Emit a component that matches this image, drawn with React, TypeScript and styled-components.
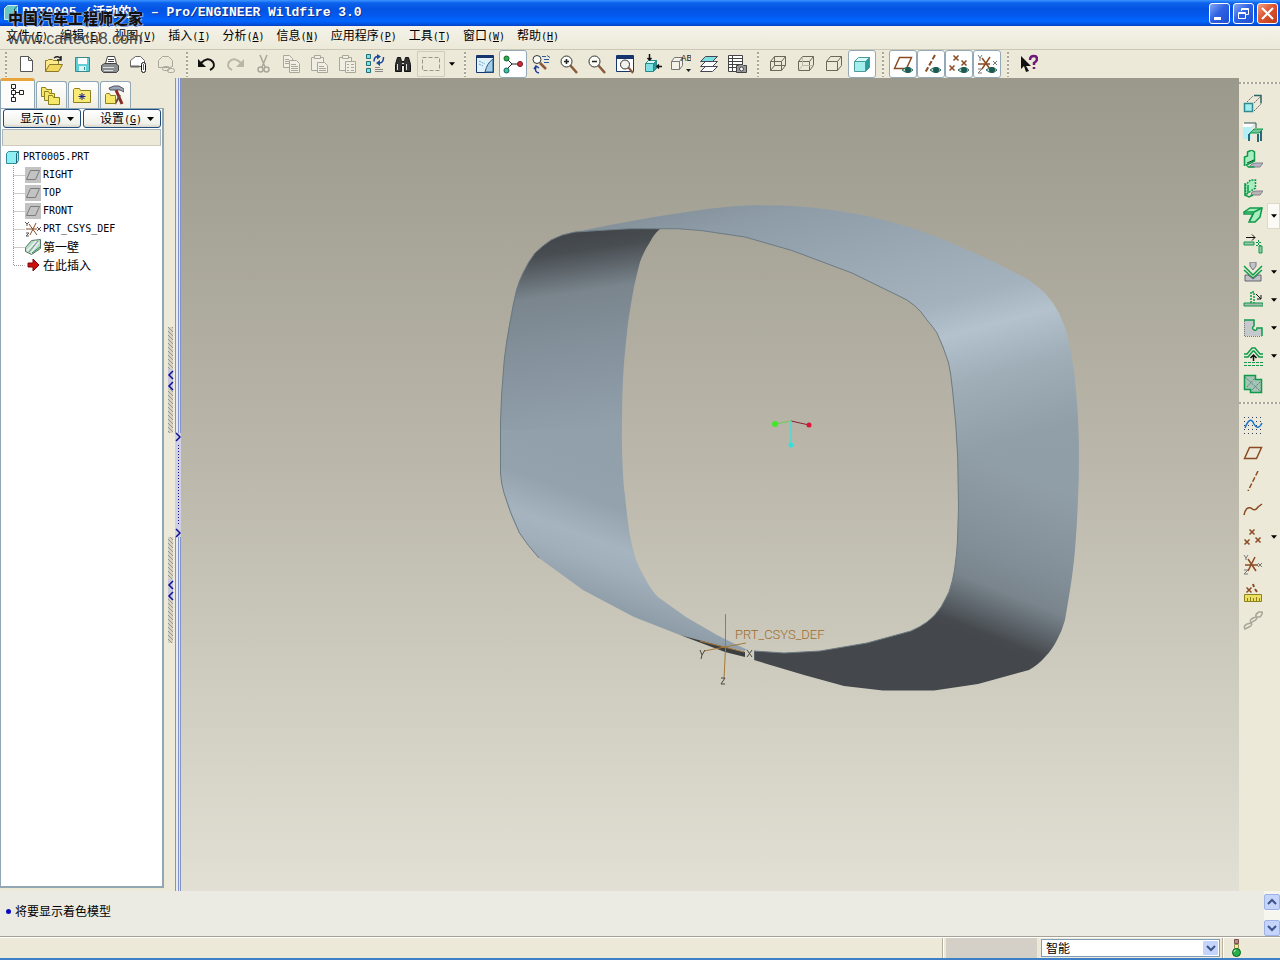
import React from "react";
import styled, { createGlobalStyle, css } from "styled-components";

const GlobalStyle = createGlobalStyle`
  * { box-sizing: border-box; }
  html, body { margin: 0; height: 100%; }
  body {
    background: #ece9d8;
    color: #000;
    font-family: "Noto Sans CJK SC", "Liberation Sans", sans-serif;
    font-size: 12px;
    line-height: 16px;
    overflow: hidden;
  }
  button, select { font: inherit; color: inherit; padding: 0; margin: 0; border: 0; background: none; }
  svg { display: block; }
`;

const Window = styled.div`
  display: flex;
  flex-direction: column;
  height: 100vh;
  border-bottom: 2px solid #3f7fc8;
`;

/* Half-width Latin text that sits beside full-width Chinese characters */
const Latin = styled.span`
  font-family: "DejaVu Sans Mono", monospace;
  font-size: 10px;
`;

/* ---------- title bar ---------- */
const TitleBar = styled.header`
  flex: none;
  height: 26px;
  display: flex;
  align-items: center;
  padding: 0 2px 0 4px;
  background: linear-gradient(#3c95ff 0, #0b62ec 3px, #0453e2 9px, #0459ee 15px, #0166ff 21px, #0154e0 24px, #0240c4 26px);
`;

const TitleText = styled.h1`
  flex: 1;
  display: flex;
  gap: 12px;
  margin: 0 0 0 3px;
  color: #fff;
  font-family: "Liberation Mono", "Noto Sans CJK SC", monospace;
  font-size: 13px;
  font-weight: 700;
  line-height: 20px;
  white-space: pre;
  text-shadow: 1px 1px 0 #0a2f8c;
`;

const CaptionButtons = styled.div`
  display: flex;
  gap: 3px;
`;

const CaptionButton = styled.button<{ $close?: boolean }>`
  width: 21px;
  height: 21px;
  border: 1px solid #fff;
  border-radius: 3px;
  background: ${(p) =>
    p.$close
      ? "linear-gradient(135deg, #f0a080, #dd5533 45%, #bc3a18)"
      : "linear-gradient(135deg, #88a8f4, #2f62e4 45%, #1e50d0)"};
`;

/* ---------- watermark lying over the title and menu ---------- */
const Watermark = styled.div`
  position: absolute;
  left: 8px;
  top: 8px;
  z-index: 5;
  pointer-events: none;
  white-space: nowrap;
`;

const WatermarkName = styled.div`
  font-size: 15px;
  font-weight: 900;
  line-height: 20px;
  color: #111;
  text-shadow: 0 0 1px #bcd0f4, 1px 1px 0 #7f9fdc, -1px 0 0 #9db6e6;
`;

const WatermarkSite = styled.div`
  font-family: "Liberation Sans", sans-serif;
  font-size: 16px;
  line-height: 22px;
  color: #4a4a4a;
`;

/* ---------- menu ---------- */
const MenuBar = styled.nav`
  flex: none;
  display: flex;
  height: 24px;
  background: linear-gradient(#f4f3ea, #ece9d8);
  border-bottom: 1px solid #cbc7b6;
`;

const MenuItem = styled.button`
  padding: 0 6px;
  height: 20px;
  white-space: nowrap;
`;

/* ---------- tool bars ---------- */
const ToolBar = styled.div`
  flex: none;
  display: flex;
  align-items: center;
  height: 28px;
  background: #ece9d8;
`;

const Grip = styled.span<{ $vertical?: boolean }>`
  flex: none;
  display: flex;
  justify-content: center;
  ${(p) =>
    p.$vertical
      ? css`
          width: 100%;
          height: 13px;
          padding-top: 4px;
          &:first-child { height: 12px; }
          &::before {
            content: "";
            width: 100%;
            height: 2px;
            background: repeating-linear-gradient(90deg, #a9a698 0 2px, #f4f2e8 2px 4px);
          }
        `
      : css`
          align-items: center;
          width: 13px;
          height: 28px;
          &:first-child { width: 12px; }
          &::before {
            content: "";
            width: 2px;
            height: 25px;
            background: repeating-linear-gradient(#a9a698 0 2px, #f4f2e8 2px 4px);
          }
        `}
`;

const ToolButton = styled.button<{ $pressed?: boolean; $boxed?: boolean }>`
  flex: none;
  display: flex;
  align-items: center;
  justify-content: center;
  width: 28px;
  height: 28px;
  border: 1px solid transparent;
  border-radius: 3px;
  ${(p) => p.$pressed && "background: #fff; border-color: #93a9b8;"}
  ${(p) => p.$boxed && "border-color: #cfccbd; height: 26px; border-radius: 1px;"}
`;

const DropButton = styled.button<{ $raised?: boolean }>`
  flex: none;
  display: flex;
  align-items: center;
  justify-content: center;
  width: 13px;
  height: 26px;
  ${(p) => p.$raised && "background: #fbfaf5; border: 1px solid #dddac9;"}
`;

/* ---------- work area ---------- */
const WorkArea = styled.main`
  flex: 1;
  min-height: 0;
  display: flex;
`;

const Navigator = styled.aside`
  flex: none;
  width: 164px;
  display: flex;
  flex-direction: column;
  padding-bottom: 3px;
`;

const TabStrip = styled.div`
  flex: none;
  display: flex;
  align-items: flex-end;
  gap: 1px;
  height: 30px;
`;

const Tab = styled.button<{ $active?: boolean }>`
  display: flex;
  align-items: center;
  justify-content: center;
  width: ${(p) => (p.$active ? 35 : 31)}px;
  height: ${(p) => (p.$active ? 30 : 27)}px;
  padding-right: 3px;
  border: 1px solid #91a7b4;
  border-bottom: 0;
  border-radius: 3px 3px 0 0;
  background: linear-gradient(#fff, #f0eee2);
  ${(p) => p.$active && "border-top: 3px solid #e8a33a; background: #fcfcfa; padding-bottom: 3px;"}
`;

const Panel = styled.section`
  flex: 1;
  min-height: 0;
  display: flex;
  flex-direction: column;
  border: 1px solid #91a7b4;
  border-width: 1px 2px 2px 1px;
  background: #fff;
  padding: 0 1px 1px;
`;

const PanelActions = styled.div`
  flex: none;
  display: flex;
  gap: 2px;
  height: 20px;
  padding-left: 1px;
`;

const PanelButton = styled.button`
  flex: 1;
  display: flex;
  align-items: center;
  justify-content: flex-end;
  gap: 5px;
  height: 19px;
  padding-right: 6px;
  border: 1px solid #1f4c7c;
  border-radius: 3px;
  background: linear-gradient(#fff, #f0f0ea 80%, #d8d4c8);
  white-space: nowrap;
`;

const TreeHeader = styled.div`
  flex: none;
  height: 17px;
  border: 1px solid #a9b6c0;
  border-bottom: 1px solid #d0ccba;
  background: #ece9d8;
`;

const Tree = styled.ul`
  flex: 1;
  margin: 0;
  padding: 2px 0 0;
  list-style: none;
`;

const TreeRow = styled.li`
  display: flex;
  align-items: center;
  height: 18px;
  white-space: nowrap;
`;

const RowIcon = styled.span<{ $root?: boolean }>`
  flex: none;
  width: ${(p) => (p.$root ? 14 : 16)}px;
  margin: ${(p) => (p.$root ? "0 3px 0 4px" : "0 2px 0 0")};
`;

const Divider = styled.div`
  flex: none;
  width: 17px;
  display: flex;
  align-items: center;
  background: linear-gradient(90deg, #ece9d8 0 11px, #8194c8 11px 12px, #e9e9f4 12px 14px, #8194c8 14px 15px, #dfe3f6 15px 16px, #8194c8 16px);
`;

const Viewport = styled.section`
  flex: 1;
  min-width: 0;
  background: linear-gradient(#9b988c, #bbb8ab 48%, #e2e0d4);
  & > svg { width: 100%; height: 100%; }
`;

const SideBar = styled.aside`
  flex: none;
  width: 41px;
  display: flex;
  flex-direction: column;
  background: #ece9d8;
`;

const SideRow = styled.div`
  display: flex;
  height: 28px;
  align-items: center;
`;

/* ---------- message log and status ---------- */
const MessageArea = styled.section`
  flex: none;
  display: flex;
  justify-content: space-between;
  height: 46px;
  background: #ebeae3;
  border-bottom: 1px solid #a5a196;
`;

const Message = styled.p`
  margin: 0;
  padding: 12px 0 0 6px;
  display: flex;
  align-items: center;
  gap: 4px;
  height: 28px;
`;

const Dot = styled.span`
  width: 5px;
  height: 5px;
  border-radius: 3px;
  background: #0a0ac0;
`;

const ScrollBar = styled.div`
  display: flex;
  flex-direction: column;
  justify-content: space-between;
  padding: 3px 0 0;
  width: 16px;
  background: #f6f5ee;
`;

const ScrollButton = styled.button`
  display: flex;
  align-items: center;
  justify-content: center;
  height: 16px;
  border: 1px solid #9fb3e6;
  border-radius: 2px;
  background: #c5d4fb;
`;

const StatusBar = styled.footer`
  flex: none;
  display: flex;
  align-items: center;
  justify-content: flex-end;
  height: 21px;
  border-top: 1px solid #fff;
`;

const StatusRule = styled.span`
  width: 2px;
  height: 20px;
  background: #b5b09c;
  border-right: 1px solid #fff;
`;

const StatusBox = styled.span`
  width: 91px;
  height: 20px;
  margin: 0 4px 0 2px;
  background: #d4cfc7;
`;

const FilterField = styled.label`
  position: relative;
  display: block;
  width: 179px;
  height: 18px;
  margin-right: 2px;
`;

const FilterSelect = styled.select`
  display: block;
  appearance: none;
  width: 100%;
  height: 18px;
  padding: 0 20px 0 4px;
  border: 1px solid #7f9db9;
  background: #fff;
  line-height: 16px;
`;

const FilterArrow = styled.span`
  position: absolute;
  right: 2px;
  top: 2px;
  width: 15px;
  height: 14px;
  display: flex;
  align-items: center;
  justify-content: center;
  border-radius: 1px;
  background: #c5d4fb;
  pointer-events: none;
`;

const StatusLight = styled.span`
  width: 56px;
  padding-left: 6px;
`;

/* ---------- icons ---------- */
const INK = "#222";
const GREY = "#aaa799";
const GREEN = "#0f9a4a";
const MINT = "#a9ecc0";
const BROWN = "#8a4a22";
const CYAN = "#7fe0e4";
const NAVY = "#15356e";

const cube = (stroke: string, mode: "wire" | "dim" | "none" | "solid") => (
  <g fill="none" stroke={stroke}>
    {mode === "solid" && (
      <>
        <path d="M2.500 7.500l4-4h11l-4 4z" fill="#d4fafa" />
        <path d="M13.500 7.500l4-4v10l-4 4z" fill="#2f9a9a" />
        <path d="M2.500 7.500h11v10h-11z" fill="#a4eeee" />
      </>
    )}
    {mode !== "solid" && <path d="M2.500 7.500h11v9h-11zM2.500 7.500l4-5h11l-4 5M17.500 2.500v9l-4 5" />}
    {mode === "wire" && <path d="M6.500 2.500v9h11M6.500 11.500l-4 5" />}
    {mode === "dim" && <path d="M6.500 2.500v9h11M6.500 11.500l-4 5" stroke="#bdb9aa" />}
  </g>
);

const eye = (
  <g>
    <path d="M9 16q6-5 11 0q-5 5-11 0z" fill="#b4d6ce" stroke="#2a6b62" />
    <circle cx="15" cy="16" r="3" fill="#1c5a52" />
  </g>
);

const cross = (x: number, y: number, c = BROWN) => (
  <path key={`${x}-${y}`} d={`M${x - 2.500} ${y - 2.500}l5 5m0-5l-5 5`} stroke={c} strokeWidth="1.500" fill="none" />
);

const magnifier = (sign?: React.ReactNode) => (
  <g fill="none">
    <path d="M11 11l7 8" stroke="#8a5a3a" strokeWidth="2.500" />
    <circle cx="7.500" cy="7.500" r="5.500" fill="#fbfbf7" stroke="#333" />
    {sign}
  </g>
);

const icons: Record<string, React.ReactNode> = {
  new: <path d="M4.500 2.500h8l4 4v11h-12zM12.500 2.500v4h4" fill="#fff" stroke="#555" />,
  open: (
    <g>
      <path d="M1.500 17.500v-11h2l1-1h4l1 1h5v4" fill="#fbe98a" stroke="#8a7a28" />
      <path d="M1.500 17.500l4-7h13l-4 7z" fill="#f3d860" stroke="#8a7a28" />
      <path d="M10 4q4-3 7 1m0-3v4h-4" fill="none" stroke={INK} strokeWidth="1.500" />
    </g>
  ),
  save: (
    <g>
      <path d="M3.500 3.500h14v14h-14z" fill="#5fcfd6" stroke="#39888e" />
      <path d="M6 4h9v6H6z" fill="#fff" />
      <path d="M7 12h7v5H7z" fill="#d8f4f4" />
      <path d="M12 13h1v3h-1z" fill="#39888e" />
    </g>
  ),
  print: (
    <g stroke="#444">
      <path d="M5.500 9.500l2-7h7l2 7z" fill="#fff" />
      <path d="M8 5.500h6M8 7.500h6" />
      <path d="M1.500 11.500l3-2h11l3 2v5l-2 2h-13l-2-2z" fill="#8b8f92" />
      <path d="M3 13.500h11M4 16.500h9" stroke="#ddd" />
    </g>
  ),
  mail: (
    <g fill="#fff" stroke="#666">
      <path d="M2.500 12.500v-6l5-4h5l4 4v6z" />
      <path d="M2.500 12.500h9" strokeWidth="2" />
      <rect x="13.500" y="8.500" width="4" height="10" rx="2" stroke="#111" />
      <path d="M15.500 10v6" />
    </g>
  ),
  mailOff: (
    <g fill="none" stroke={GREY}>
      <path d="M2.500 13.500v-7l4-4h6l4 4v6l-3 1z" />
      <rect x="6.500" y="12.500" width="7" height="4" rx="2" />
      <rect x="11.500" y="14.500" width="7" height="4" rx="2" />
    </g>
  ),
  undo: (
    <g>
      <path d="M4 9q7-7 12-1q3 5-3 8" fill="none" stroke="#111" strokeWidth="2" />
      <path d="M1 5v8h8z" fill="#111" />
    </g>
  ),
  redo: (
    <g>
      <path d="M16 9q-7-7-12-1q-3 5 3 8" fill="none" stroke="#b9b6a8" strokeWidth="2" />
      <path d="M19 5v8h-8z" fill="#b9b6a8" />
    </g>
  ),
  cut: (
    <g fill="none" stroke={GREY} strokeWidth="1.500">
      <path d="M7 1l5 12M14 1L9 13" />
      <circle cx="7.500" cy="15.500" r="2.500" />
      <circle cx="13.500" cy="15.500" r="2.500" />
    </g>
  ),
  copy: (
    <g fill="#f1efe4" stroke={GREY}>
      <path d="M2.500 1.500h6l3 3v9h-9z" />
      <path d="M4 5.500h4M4 7.500h5M4 9.500h5" />
      <path d="M8.500 6.500h7l3 3v9h-10z" />
      <path d="M10 10.500h5M10 12.500h7M10 14.500h7M10 16.500h7" />
    </g>
  ),
  paste: (
    <g fill="#f1efe4" stroke={GREY}>
      <path d="M2.500 3.500h12v13h-12z" />
      <path d="M5.500 1.500h6v3h-6z" />
      <path d="M8.500 8.500h7l3 3v7h-10z" />
      <path d="M10 12.500h5M10 14.500h7M10 16.500h7" />
    </g>
  ),
  pasteSpecial: (
    <g fill="#f1efe4" stroke={GREY}>
      <path d="M2.500 3.500h12v13h-12z" />
      <path d="M5.500 1.500h6v3h-6z" />
      <path d="M8.500 7.500h10v11h-10z" />
      <path d="M10 10.500h2m2 0h3M10 13.500h2m2 0h3M10 16.500h2m2 0h3" />
    </g>
  ),
  regenerate: (
    <g fill="none">
      <path d="M1.500 .5h4v4h-4zM1.500 7.500h4v4h-4zM1.500 14.500h4v4h-4z" fill={CYAN} stroke="#1f6e78" />
      <path d="M9 7.500q0-5 4-5M18.500 3q0 6-4 6" stroke="#1c4a9c" strokeWidth="1.500" />
      <path d="M12 0l4 2.500l-4 3zM15 6l-4 3l4 3z" fill="#1c4a9c" />
      <path d="M10 13.500h5M10 15.500h8M10 17.500h8" stroke="#888" />
    </g>
  ),
  find: (
    <g fill="#333" stroke="#111">
      <path d="M2.500 17.500v-7l2-7h3l1 4h3l1-4h3l2 7v7h-6v-6h-3v6z" />
      <path d="M4.500 10v6M13.500 10v6M9 9.500h2" stroke="#ddd" />
    </g>
  ),
  select: <path d="M1.500 3.500h17v13h-17z" fill="none" stroke="#99968a" strokeDasharray="4 2" />,
  repaint: (
    <g>
      <path d="M1.500 1.500h17v17h-17z" fill="#dff1fa" stroke={NAVY} />
      <path d="M2 2h16v2H2z" fill={NAVY} />
      <path d="M18 5Q12 9 10 18h8z" fill="#a4cde8" stroke="#2a5a8a" />
      <path d="M4 7l6 3M4 10l4 2" stroke="#6aa6cc" strokeDasharray="2 1" />
    </g>
  ),
  spin: (
    <g stroke="#222">
      <path d="M3 4l6 6l-6 6M9 10h8" fill="none" />
      <circle cx="3.500" cy="4.500" r="2.500" fill="#27b04c" stroke="#14602a" />
      <circle cx="3.500" cy="16.500" r="2.500" fill="#3fc49c" stroke="#14605a" />
      <circle cx="17" cy="10" r="2.500" fill="#d02c3c" stroke="#701018" />
    </g>
  ),
  orient: (
    <g fill="none">
      <circle cx="6" cy="5.500" r="4" fill="#fbfbf7" stroke="#333" />
      <path d="M9 9l6 6" stroke="#8a5a3a" strokeWidth="2.500" />
      <path d="M11 2.500h4m-2 3h5m-2-4l3 2M13 8.500h5" stroke="#2a5aa0" />
      <path d="M8 19q-5-1-3-6m-2 2l2-3l3 2" stroke="#1c3a9c" strokeWidth="1.500" />
    </g>
  ),
  zoomIn: magnifier(<path d="M5 7.500h5M7.500 5v5" stroke={INK} strokeWidth="1.500" />),
  zoomOut: magnifier(<path d="M5 7.500h5" stroke={INK} strokeWidth="1.500" />),
  refit: (
    <g>
      <path d="M1.500 1.500h17v16h-17z" fill="#fff" stroke={NAVY} />
      <path d="M2 2h16v3H2z" fill={NAVY} />
      <path d="M13 13l5 6" stroke="#8a5a3a" strokeWidth="2" />
      <circle cx="10" cy="10.500" r="4.500" fill="#f3f3ee" stroke="#333" />
    </g>
  ),
  reorient: (
    <g>
      <path d="M2.500 9.500l3-3h8l-3 3z" fill="#d8fafa" stroke="#2a8a8a" />
      <path d="M10.500 9.500l3-3v8l-3 3z" fill="#2f9a9a" stroke="#2a8a8a" />
      <path d="M2.500 9.500h8v8h-8z" fill={CYAN} stroke="#2a8a8a" />
      <path d="M6.500 0v6m-2-2l2 2l2-2M19 12.500h-5m2-2l-2 2l2 2" fill="none" stroke="#111" strokeWidth="1.500" />
    </g>
  ),
  savedViews: (
    <g>
      <path d="M.5 7.500l3-4h8v8l-3 4h-8zM.5 7.500h8v8m0-8l3-4" fill="#f3f1e8" stroke="#777" />
      <path d="M15 15h5l-2.500 3z" fill={INK} />
      <text x="10" y="7" fontSize="9" fontFamily="Liberation Mono, monospace" fill={INK}>AB</text>
    </g>
  ),
  layers: (
    <g stroke="#445">
      <path d="M1.500 17.500l5-5h12l-5 5z" fill="#fff" />
      <path d="M1.500 12.500l5-5h12l-5 5z" fill="#fff" />
      <path d="M1.500 7.500l5-5h12l-5 5z" fill={CYAN} />
    </g>
  ),
  viewManager: (
    <g fill="#fff" stroke="#444">
      <path d="M1.500 1.500h14v16h-14zM1.500 4.500h14M1.500 7.500h14M1.500 10.500h14M1.500 13.500h14M5.500 1.500v16" />
      <path d="M9.500 11.500h2l1-1h3l1 1h3v7h-10z" fill="#999" />
      <circle cx="14.500" cy="15" r="2" />
    </g>
  ),
  wireframe: cube("#6b6858", "wire"),
  hidden: cube("#6b6858", "dim"),
  noHidden: cube("#6b6858", "none"),
  shading: cube("#4a9a9a", "solid"),
  planes: (
    <g>
      <path d="M1.500 14.500l5-11h12l-5 11z" fill="none" stroke={BROWN} strokeWidth="1.500" />
      {eye}
    </g>
  ),
  axes: (
    <g>
      <path d="M14 1L4 19" stroke={BROWN} strokeWidth="2" strokeDasharray="5 2" />
      {eye}
    </g>
  ),
  points: <g>{[cross(7, 4), cross(3, 14), cross(15, 9)]}{eye}</g>,
  csys: (
    <g>
      <path d="M1 10h12M5 15l8-12M5 4l8 11" stroke={BROWN} strokeWidth="1.500" />
      <path d="M1 1l2 3l2-3M3 4v3M1 15h4l-4 4h4M16 7l4 4m0-4l-4 4" stroke="#777" fill="none" />
      {eye}
    </g>
  ),
  help: (
    <g>
      <path d="M3 2v13l3-3l2 6l3-1l-3-5h5z" fill="#111" />
      <path d="M12 6q0-4 4-4q3 0 3 3q0 2-3 4v2m0 2v2" fill="none" stroke="#6f1a78" strokeWidth="2.500" />
    </g>
  ),
  /* sheet-metal features */
  solidRef: (
    <g fill="none" stroke="#666">
      <path d="M4 8l6-6M11 9l7-7M11 17l7-7" strokeDasharray="2 1" />
      <path d="M11 1.500h7v8" stroke="#2a6464" strokeWidth="1.500" />
      <path d="M1.500 9.500h8v8h-8z" fill="#a4eef0" stroke="#2f8a92" strokeWidth="1.500" />
    </g>
  ),
  convert: (
    <g>
      <path d="M0 2h12L8 7v10H0z" fill="#b4eef6" />
      <path d="M0 1h12l-4 4H0z" fill="#fff" />
      <path d="M1 1h12v5" fill="none" stroke="#35505a" />
      <path d="M6 12l5-5h9l-4 4H8z" fill="#73c69a" stroke={GREEN} />
      <path d="M6 12v7M15 12v8M18 9v10" stroke="#2b6878" strokeWidth="2" />
    </g>
  ),
  flatWall: (
    <g>
      <path d="M9 14l4-1h7l-3 4H6z" fill="#b9b4c2" stroke="#85808f" />
      <path d="M1.500 16v-9l3-1v-4l4-2l3 2v9l-8 4l2 2h6" fill={MINT} stroke={GREEN} strokeWidth="1.500" />
      <path d="M4 13l7-3" stroke="#124a30" />
    </g>
  ),
  flange: (
    <g>
      <path d="M9 14l4-1h7l-3 4H8z" fill="#b9b4b2" stroke="#85808f" />
      <path d="M2.500 17v-10l5-5h5v8l-6 4z" fill={MINT} stroke={GREEN} strokeWidth="1.500" strokeDasharray="2 1" />
      <path d="M2 5v12l4 2l4-2M5 7v8" stroke={GREEN} fill="none" strokeWidth="1.500" />
    </g>
  ),
  unattached: (
    <g fill={MINT} stroke={GREEN} strokeWidth="1.500">
      <path d="M1 6l6-4h12l-2 9l-5 5h-6l4-8H1z" />
      <path d="M1 6h10l-4 8h-1M11 6l8-4" fill="none" />
    </g>
  ),
  extend: (
    <g>
      <path d="M3 3.500h9m-3-3l3 3l-3 3" stroke="#111" fill="none" />
      <path d="M1 8h10v3H1zM16 12h3v7h-3z" fill="#9cc6ac" stroke={GREEN} />
      <path d="M13 8.500h6M13 11.500h6M15.500 6v6" stroke={GREEN} strokeDasharray="2 1" />
    </g>
  ),
  bend: (
    <g>
      <path d="M7 0h6v4l-3 4l-3-4z" fill="#c2c2ca" stroke="#77777f" />
      <path d="M1 4l9 9l9-9M1 8l9 8l9-8" fill="none" stroke={GREEN} strokeWidth="1.500" />
      <path d="M2 13l3 0l5 4l5-4h3v6H2z" fill="#c2c2ca" stroke="#66666f" />
    </g>
  ),
  unbend: (
    <g>
      <path d="M8 13V2h3v11" fill="none" stroke={GREEN} strokeDasharray="2 1" strokeWidth="1.500" />
      <path d="M1 13h19v3H1z" fill="#a9b8ae" stroke={GREEN} />
      <path d="M13 4l5 5m0-4v4h-4" stroke="#111" fill="none" />
    </g>
  ),
  rip: (
    <g fill="none" stroke={GREEN} strokeWidth="1.500">
      <path d="M1 2h10v6q-3 2 0 4q3 1 3-2h5v8H1z" fill="#c5c9cc" stroke="none" />
      <path d="M1 2h10v6q-3 2 0 4q3 1 3-2h5v8" />
      <path d="M1.500 3v15.500h17" stroke="#777" strokeWidth="1" strokeDasharray="1 1" />
    </g>
  ),
  flatPattern: (
    <g fill="none" stroke={GREEN} strokeWidth="1.500">
      <path d="M1 8h3l5-6h3l5 6h3M1 11h4l5-6h1l5 6h4" />
      <path d="M1 16.500h19M1 19.500h19" strokeDasharray="3 1" strokeWidth="1" />
      <path d="M10.500 15V9m-3 3l3-3l3 3" stroke="#111" />
    </g>
  ),
  cornerRelief: (
    <g>
      <path d="M1.500 4v-2.500h11v4h6v13h-11v-3h-6z" fill="#a4c4b4" stroke={GREEN} strokeWidth="1.500" />
      <path d="M2 3l16 15M17 8L8 17M4 13l8-9" stroke="#5b7f84" strokeWidth="1" strokeDasharray="2 1" />
    </g>
  ),
  sketch: (
    <g fill="none">
      <path d="M1 2.500h18M1 6.500h18M1 10.500h18M1 14.500h18M1 18.500h18" stroke="#34405a" strokeDasharray="1 3" />
      <path d="M2 13q5-13 9-4q4 7 8-1" stroke="#1c74cc" strokeWidth="1.500" />
    </g>
  ),
  planeTool: <path d="M1.500 15.500l5-11h12l-5 11z" fill="none" stroke={BROWN} strokeWidth="1.500" />,
  axisTool: <path d="M15 0L5 20" stroke={BROWN} strokeWidth="1.500" strokeDasharray="5 2" />,
  curve: <path d="M1 16q2-9 7-7q4 4 7-1l4-3" fill="none" stroke={BROWN} strokeWidth="1.500" />,
  pointTool: <g>{[cross(9, 5), cross(4, 15), cross(15, 13)]}</g>,
  csysTool: (
    <g fill="none">
      <path d="M2 10h13M5 16l7-14M5 4l8 12" stroke={BROWN} strokeWidth="1.500" />
      <path d="M1 0l2 3l2-3M3 3v2M1 15h4l-4 4h4M15 8l4 4m0-4l-4 4" stroke="#777" />
    </g>
  ),
  analysis: (
    <g>
      {cross(6, 7)}
      <path d="M10 1l1 3m1 2l2 3" stroke={BROWN} strokeWidth="2" />
      <path d="M1.500 11.500h17v7h-17z" fill="#ecdf62" stroke="#8d8220" />
      <path d="M4.500 15v3M7.500 14v4M10.500 15v3M13.500 14v4M16.500 15v3" stroke="#8d8220" />
    </g>
  ),
  reference: (
    <g fill="none" stroke="#a9a69a" strokeWidth="1.500">
      <path d="M2 18q-2-3 2-5l4-1q2 2-2 4zM8 12q-2-3 2-5l3-1q2 2-2 4zM13 6q-1-3 3-5l3 0q1 2-2 5z" />
    </g>
  ),
  /* navigator tabs */
  tabTree: <path d="M5.500 1.500h4v4h-4zM5.500 7.500h4v4h-4zM5.500 14.500h4v4h-4zM13.500 7.500h4v4h-4zM7.500 5.500v2M7.500 11.500v3M9.500 9.500h4" fill="none" stroke={INK} />,
  tabFolders: (
    <g fill="#f8e86a" stroke="#8d8220">
      <path d="M1.500 2.500h4l1 2h5v7h-10z" />
      <path d="M4.500 6.500h4l1 2h5v7h-10z" />
      <path d="M8.500 10.500h4l1 2h6v7h-11z" />
    </g>
  ),
  tabFavorites: (
    <g>
      <path d="M1.500 17.500v-13l1-1h5l1 2h10v12z" fill="#f8ea74" stroke="#8d8220" />
      <path d="M10 8v7M6.500 11.500h7M7.500 9l5 5m0-5l-5 5" stroke="#15208c" />
    </g>
  ),
  tabTools: (
    <g>
      <path d="M5 3l5-2h5l5 3v3l-4-2H6z" fill="#9aa6b4" stroke="#556" />
      <path d="M12 5l6 14" stroke="#8a2a24" strokeWidth="3" />
      <path d="M16 10l-5 9" stroke="#6a4a3a" strokeWidth="2" />
      <path d="M1.500 18.500v-9l1-1h3l1 2h5v8z" fill="#f8e86a" stroke="#8d8220" />
    </g>
  ),
};

const Icon = ({ name }: { name: string }) => (
  <svg width="20" height="20" viewBox="0 0 20 20" aria-hidden="true">
    {icons[name]}
  </svg>
);

const DownTriangle = ({ size = 5 }: { size?: number }) => (
  <svg width={size + 2} height="4" viewBox="0 0 7 4" aria-hidden="true">
    <path d="M0 0h7L3.500 4z" fill="#000" />
  </svg>
);

const Chevron = ({ up }: { up?: boolean }) => (
  <svg width="10" height="8" viewBox="0 0 10 8" aria-hidden="true">
    <path d={up ? "M1 6l4-4l4 4" : "M1 2l4 4l4-4"} fill="none" stroke="#3c5488" strokeWidth="2" />
  </svg>
);

/* ---------- data ---------- */
const menus: [string, string][] = [
  ["文件", "F"], ["编辑", "E"], ["视图", "V"], ["插入", "I"], ["分析", "A"],
  ["信息", "N"], ["应用程序", "P"], ["工具", "T"], ["窗口", "W"], ["帮助", "H"],
];

type Tool = { icon: string; label: string; pressed?: boolean; boxed?: boolean; drop?: boolean; raised?: boolean };

const toolGroups: Tool[][] = [
  [
    { icon: "new", label: "新建" }, { icon: "open", label: "打开" }, { icon: "save", label: "保存" },
    { icon: "print", label: "打印" }, { icon: "mail", label: "发送邮件" }, { icon: "mailOff", label: "发送链接" },
  ],
  [
    { icon: "undo", label: "撤消" }, { icon: "redo", label: "重做" }, { icon: "cut", label: "剪切" },
    { icon: "copy", label: "复制" }, { icon: "paste", label: "粘贴" }, { icon: "pasteSpecial", label: "选择性粘贴" },
    { icon: "regenerate", label: "再生" }, { icon: "find", label: "查找" },
    { icon: "select", label: "选取框", boxed: true, drop: true },
  ],
  [
    { icon: "repaint", label: "重画" }, { icon: "spin", label: "旋转中心", pressed: true }, { icon: "orient", label: "定向模式" },
    { icon: "zoomIn", label: "放大" }, { icon: "zoomOut", label: "缩小" }, { icon: "refit", label: "重新调整" },
    { icon: "reorient", label: "重定向" }, { icon: "savedViews", label: "已保存视图" }, { icon: "layers", label: "层" },
    { icon: "viewManager", label: "视图管理器" },
  ],
  [
    { icon: "wireframe", label: "线框" }, { icon: "hidden", label: "隐藏线" }, { icon: "noHidden", label: "无隐藏线" },
    { icon: "shading", label: "着色", pressed: true },
  ],
  [
    { icon: "planes", label: "基准平面", pressed: true }, { icon: "axes", label: "基准轴", pressed: true },
    { icon: "points", label: "基准点", pressed: true }, { icon: "csys", label: "坐标系", pressed: true },
  ],
  [{ icon: "help", label: "帮助" }],
];

const sideGroups: Tool[][] = [
  [
    { icon: "solidRef", label: "实体" }, { icon: "convert", label: "转换" }, { icon: "flatWall", label: "平整壁" },
    { icon: "flange", label: "法兰壁" }, { icon: "unattached", label: "分离壁", drop: true, raised: true },
    { icon: "extend", label: "延伸" }, { icon: "bend", label: "折弯", drop: true }, { icon: "unbend", label: "展平", drop: true },
    { icon: "rip", label: "扯裂", drop: true }, { icon: "flatPattern", label: "成形", drop: true },
    { icon: "cornerRelief", label: "止裂槽" },
  ],
  [
    { icon: "sketch", label: "草绘" }, { icon: "planeTool", label: "平面" }, { icon: "axisTool", label: "轴" },
    { icon: "curve", label: "曲线" }, { icon: "pointTool", label: "点", drop: true }, { icon: "csysTool", label: "坐标系" },
    { icon: "analysis", label: "分析" }, { icon: "reference", label: "参照" },
  ],
];

const treeItems: { label: string; kind: "plane" | "csys" | "wall" | "insert"; cjk?: boolean }[] = [
  { label: "RIGHT", kind: "plane" },
  { label: "TOP", kind: "plane" },
  { label: "FRONT", kind: "plane" },
  { label: "PRT_CSYS_DEF", kind: "csys" },
  { label: "第一壁", kind: "wall", cjk: true },
  { label: "在此插入", kind: "insert", cjk: true },
];

const treeIcons = {
  plane: (
    <g>
      <path d="M0 0h16v16H0z" fill="#c3c3c3" />
      <path d="M1.500 12.500l4-9h9l-4 9z" fill="none" stroke="#7b7b7b" />
    </g>
  ),
  csys: (
    <g fill="none">
      <path d="M1 8h11M5 14l6-12M4 3l8 11" stroke={BROWN} />
      <path d="M0 1l2 2l2-2M2 3v2M1 12h3l-3 3h3M12 6l4 4m0-4l-4 4" stroke="#555" />
    </g>
  ),
  wall: (
    <g>
      <path d="M.5 8.500l6-7l9-1v9l-9 6l-6-3z" fill="#b4dcc0" stroke="#5a7468" />
      <path d="M2 12L11 2M6 14l8-11" stroke="#f0ecf6" strokeWidth="1.500" />
      <path d="M4 13l9-11" stroke="#7c8a98" />
      <path d="M7 14l8-6" stroke="#2c8a58" />
    </g>
  ),
  insert: <path d="M3 6h5V2l6 6l-6 6v-4H3z" fill="#d01010" stroke="#7c0808" />,
};

const Branch = ({ last }: { last?: boolean }) => (
  <svg width="23" height="18" viewBox="0 0 23 18" aria-hidden="true">
    <path d={last ? "M11.500 0v9.500h11" : "M11.500 0v18M11.500 9.500h11"} fill="none" stroke="#9b9b9b" strokeDasharray="1 1" />
  </svg>
);

/* Hatched quick-sash handles on both sides of the draggable grip */
const SashHandles = () => (
  <svg width="17" height="316" viewBox="0 0 17 316" aria-hidden="true">
    <defs>
      <pattern id="hatch" width="4" height="4" patternUnits="userSpaceOnUse">
        <path d="M0 0h4v4H0z" fill="#d5d2c4" />
        <path d="M0 0l4 4" stroke="#99968a" />
      </pattern>
    </defs>
    <path d="M4 0h5v106H4zM4 210h5v106H4z" fill="url(#hatch)" />
    <path d="M4 42h5v20H4zM4 252h5v20H4z" fill="#c6c6dc" />
    <path d="M9 44l-4 4l4 4M9 55l-4 4l4 4M9 254l-4 4l4 4M9 265l-4 4l4 4" fill="none" stroke="#10108c" strokeWidth="1.500" />
    <path d="M11 106h6v104h-6z" fill="#cfd0e4" />
    <path d="M14.500 118v80" stroke="#10108c" strokeDasharray="1 2" />
    <path d="M12 106l4 4l-4 4M12 202l4 4l-4 4" fill="none" stroke="#10108c" strokeWidth="1.500" />
  </svg>
);

const outerEdge =
  "M575 232L610 225L654 217L690 211.500Q725 206 753 205.300Q775 205 792 206Q815 207 836 210.500L863 215Q890 221 915 229Q940 238 954 244L994 261.700L1029 280Q1037 286 1045 293Q1053 302 1059 313L1066 330Q1070 346 1071 353Q1074 370 1075 380Q1077 400 1078 417Q1079 440 1079 457Q1079 480 1078 500Q1077 525 1075 550Q1073 572 1070 590L1065 620Q1062 631 1057 640Q1052 650 1045 657Q1038 665 1029 670L978 684L934 690.500H883L844 686L804 675L754 660";
const innerEdge =
  "V651L784 653L820 651L867 643L911 631Q920 627 927 622Q935 616 941 607Q946 598 949 592Q953 580 954.500 570Q957 553 957.500 540L958.500 507L957.700 457L955.700 423L952.500 390Q951 374 948.600 363L943 347L937 333Q933 327 927 320Q921 311 915 306Q907 299 899 296L852 273L792 250.500L745 237L701 230.500L678 228.700H630L598 230.500z";
const leftFace =
  "M575 232Q562 234 551 240Q542 246 535 253Q528 262 523 273Q519 281 516.500 290Q512 305 510 320Q506 340 504 363Q501 395 500.500 423V473Q501 483 504 493Q506 503 510 513Q514 524 519.500 533Q528 546 539 558L583 590L634 617L680 635L725 647L754 653L733 643L717 635L686 617L658 597Q651 590 646 580Q640 570 636 560Q632 547 629.500 533Q627 516 625.500 500Q623 484 622.700 467Q621.500 445 622 423Q622 390 624 363Q626 341 628 323Q631 303 634 287Q637 273 640 262Q644 251 650 242Q654 234 660 229L630 228.300L598 230.500z";

const Model = () => (
  <svg viewBox="181 78 1058 813" role="img" aria-label="PRT0005">
    <defs>
      <linearGradient id="frontTop" gradientUnits="userSpaceOnUse" x1="620" y1="220" x2="709" y2="549">
        <stop offset="0" stopColor="#84919b" />
        <stop offset="0.100" stopColor="#8e9ca7" />
        <stop offset="0.350" stopColor="#9cabb6" />
        <stop offset="0.480" stopColor="#a3b2bd" />
        <stop offset="0.580" stopColor="#b3c2cd" />
        <stop offset="0.720" stopColor="#a0aeb8" />
        <stop offset="0.920" stopColor="#919fa9" />
        <stop offset="1" stopColor="#909ea8" />
      </linearGradient>
      <linearGradient id="frontBottom" gradientUnits="userSpaceOnUse" x1="957" y1="450" x2="895" y2="607">
        <stop offset="0" stopColor="#909ea8" />
        <stop offset="0.500" stopColor="#828e97" />
        <stop offset="0.680" stopColor="#79848c" />
        <stop offset="0.830" stopColor="#5d656b" />
        <stop offset="0.950" stopColor="#464a4e" />
        <stop offset="1" stopColor="#44484c" />
      </linearGradient>
      <linearGradient id="leftTop" gradientUnits="userSpaceOnUse" x1="575" y1="235" x2="603" y2="430">
        <stop offset="0" stopColor="#43474b" />
        <stop offset="0.080" stopColor="#484d51" />
        <stop offset="0.290" stopColor="#7a858d" />
        <stop offset="0.650" stopColor="#87949f" />
        <stop offset="1" stopColor="#91a0ab" />
      </linearGradient>
      <linearGradient id="leftBottom" gradientUnits="userSpaceOnUse" x1="560" y1="440" x2="510" y2="578">
        <stop offset="0" stopColor="#91a0ab" />
        <stop offset="0.300" stopColor="#94a2ad" />
        <stop offset="0.560" stopColor="#a5b4be" />
        <stop offset="0.700" stopColor="#a1afba" />
        <stop offset="1" stopColor="#8c9aa5" />
      </linearGradient>
      <clipPath id="frontClip"><path d={outerEdge + innerEdge} /></clipPath>
      <clipPath id="leftClip"><path d={leftFace} /></clipPath>
    </defs>
    <g clipPath="url(#leftClip)">
      <path d="M490 200h270v231H490z" fill="url(#leftTop)" />
      <path d="M490 430h270v240H490z" fill="url(#leftBottom)" />
    </g>
    <path d="M680 635L725 647L745 652V657L725 652z" fill="#3c3f40" />
    <g clipPath="url(#frontClip)">
      <path d="M570 200h520v251H570z" fill="url(#frontTop)" />
      <path d="M740 450h350v250H740z" fill="url(#frontBottom)" />
    </g>
    <path d={"M754 660" + innerEdge.replace("z", "L575 232")} fill="none" stroke="#6c7a82" />
    <path d="M575 232Q562 234 551 240Q542 246 535 253Q528 262 523 273Q519 281 516.500 290Q506 340 504 363Q501 395 500.500 423V473Q501 483 504 493Q510 513 519.500 533Q528 546 539 558" fill="none" stroke="#6c7a82" />

    <path d="M791 421L775 424" stroke="#6ccf4c" />
    <path d="M791 421L809 425" stroke="#8c1c34" />
    <path d="M791 421V445" stroke="#45dfd8" strokeWidth="1.500" />
    <circle cx="775" cy="424" r="3" fill="#3fe828" />
    <circle cx="809" cy="425" r="2.500" fill="#dc1438" />
    <circle cx="791" cy="445" r="2.500" fill="#30e0e0" />

    <path d="M725.500 614V648L724 679M704 651L746 643M700 641L744 652" fill="none" stroke="#a97838" />
    <path d="M745 650h9v10h-9z" fill="#cfccbf" />
    <g fill="none" stroke="#4a4640">
      <path d="M700 650l2 5l3-5M702 655l-1 4M747 650l5 7m0-7l-5 7M721 678h4l-4 6h4" />
    </g>
    <text x="735" y="639" fontFamily="Roboto, sans-serif" fontWeight="300" fontSize="13" fill="#a06c2c">PRT_CSYS_DEF</text>
  </svg>
);

export default function App() {
  return (
    <>
      <GlobalStyle />
      <Window>
        <TitleBar>
          <svg width="15" height="16" viewBox="0 0 15 16" aria-hidden="true">
            <path d="M.5 3.500l3-3h10v10l-3 4h-10z" fill="#67c8c8" stroke="#cdeef0" />
            <path d="M10.500 14v-10l3-3" stroke="#205c6c" fill="none" />
          </svg>
          <TitleText>
            <span>PRT0005 (活动的)</span>
            <span>– Pro/ENGINEER Wildfire 3.0</span>
          </TitleText>
          <CaptionButtons>
            <CaptionButton aria-label="最小化">
              <svg width="19" height="19" viewBox="0 0 19 19"><path d="M4 13h7v3H4z" fill="#fff" /></svg>
            </CaptionButton>
            <CaptionButton aria-label="还原">
              <svg width="19" height="19" viewBox="0 0 19 19">
                <path d="M7.500 7v-2.500h7v6H12M7.500 5.500h7M4.500 8.500h7v6h-7zM4.500 9.500h7" fill="none" stroke="#fff" />
              </svg>
            </CaptionButton>
            <CaptionButton $close aria-label="关闭">
              <svg width="19" height="19" viewBox="0 0 19 19"><path d="M4 4l11 11m0-11l-11 11" stroke="#fff" strokeWidth="2" /></svg>
            </CaptionButton>
          </CaptionButtons>
        </TitleBar>
        <Watermark>
          <WatermarkName>中国汽车工程师之家</WatermarkName>
          <WatermarkSite>www.cartech8.com</WatermarkSite>
        </Watermark>

        <MenuBar>
          {menus.map(([name, key]) => (
            <MenuItem key={key}>
              {name}
              <Latin>(<u>{key}</u>)</Latin>
            </MenuItem>
          ))}
        </MenuBar>

        <ToolBar>
          {toolGroups.map((group, i) => (
            <React.Fragment key={i}>
              <Grip />
              {group.map((t) => (
                <React.Fragment key={t.icon}>
                  <ToolButton $pressed={t.pressed} $boxed={t.boxed} aria-label={t.label}>
                    <Icon name={t.icon} />
                  </ToolButton>
                  {t.drop && <DropButton aria-label={t.label + "选项"}><DownTriangle size={4} /></DropButton>}
                </React.Fragment>
              ))}
            </React.Fragment>
          ))}
        </ToolBar>

        <WorkArea>
          <Navigator>
            <TabStrip>
              <Tab $active aria-label="模型树"><Icon name="tabTree" /></Tab>
              <Tab aria-label="文件夹浏览器"><Icon name="tabFolders" /></Tab>
              <Tab aria-label="收藏夹"><Icon name="tabFavorites" /></Tab>
              <Tab aria-label="连接"><Icon name="tabTools" /></Tab>
            </TabStrip>
            <Panel>
              <PanelActions>
                <PanelButton><span>显示<Latin>(<u>O</u>)</Latin></span><DownTriangle /></PanelButton>
                <PanelButton><span>设置<Latin>(<u>G</u>)</Latin></span><DownTriangle /></PanelButton>
              </PanelActions>
              <TreeHeader />
              <Tree>
                <TreeRow>
                  <RowIcon $root>
                    <svg width="14" height="14" viewBox="0 0 14 14" aria-hidden="true">
                      <path d="M.5 3.500l2-2h10v9l-2 3h-10z" fill="#8ff0f4" stroke="#2f8a9a" />
                      <path d="M10.500 13v-9.500l2-2" fill="none" stroke="#1f6474" />
                    </svg>
                  </RowIcon>
                  <Latin>PRT0005.PRT</Latin>
                </TreeRow>
                {treeItems.map((item, i) => (
                  <TreeRow key={item.label}>
                    <Branch last={i === treeItems.length - 1} />
                    <RowIcon>
                      <svg width="16" height="16" viewBox="0 0 16 16" aria-hidden="true">{treeIcons[item.kind]}</svg>
                    </RowIcon>
                    {item.cjk ? item.label : <Latin>{item.label}</Latin>}
                  </TreeRow>
                ))}
              </Tree>
            </Panel>
          </Navigator>

          <Divider><SashHandles /></Divider>

          <Viewport><Model /></Viewport>

          <SideBar>
            {sideGroups.map((group, i) => (
              <React.Fragment key={i}>
                <Grip $vertical />
                {group.map((t) => (
                  <SideRow key={t.icon}>
                    <ToolButton aria-label={t.label}><Icon name={t.icon} /></ToolButton>
                    {t.drop && <DropButton $raised={t.raised} aria-label={t.label + "选项"}><DownTriangle size={4} /></DropButton>}
                  </SideRow>
                ))}
              </React.Fragment>
            ))}
          </SideBar>
        </WorkArea>

        <MessageArea>
          <Message><Dot />将要显示着色模型</Message>
          <ScrollBar>
            <ScrollButton aria-label="向上滚动"><Chevron up /></ScrollButton>
            <ScrollButton aria-label="向下滚动"><Chevron /></ScrollButton>
          </ScrollBar>
        </MessageArea>

        <StatusBar>
          <StatusRule />
          <StatusBox />
          <FilterField>
            <FilterSelect aria-label="选取过滤器" defaultValue="smart">
              <option value="smart">智能</option>
            </FilterSelect>
            <FilterArrow><Chevron /></FilterArrow>
          </FilterField>
          <StatusRule />
          <StatusLight>
            <svg width="12" height="20" viewBox="0 0 12 20" aria-hidden="true">
              <path d="M4.500 1.500h4v4h-4z" fill="#b98a86" stroke="#77504c" />
              <path d="M4.500 6.500h4v4h-4z" fill="#f5ec8c" stroke="#99905c" />
              <circle cx="6.500" cy="14.500" r="4" fill="#28b048" stroke="#0c5c20" />
              <path d="M4 14q0-2 2-2" stroke="#c8f4d0" fill="none" />
            </svg>
          </StatusLight>
        </StatusBar>
      </Window>
    </>
  );
}
